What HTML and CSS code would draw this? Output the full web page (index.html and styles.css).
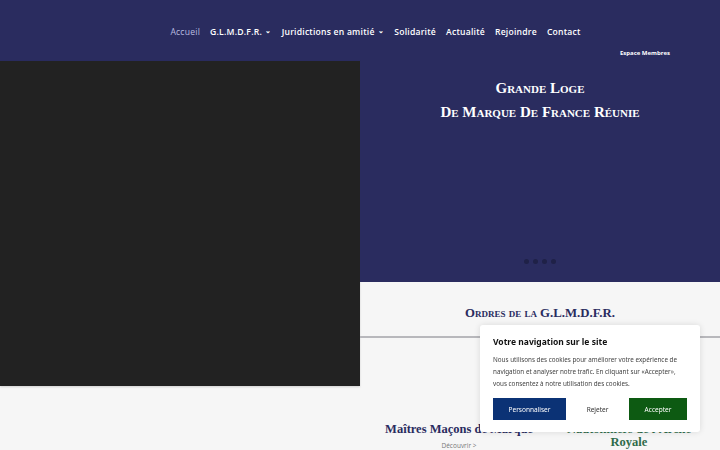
FILE: index.html
```html
<!DOCTYPE html>
<html lang="fr">

<head>
    <meta charset="UTF-8">
    <meta name="viewport" content="width=device-width, initial-scale=1.0">
    <title>Grande Loge de Marque de France Réunie</title>
    <link rel="stylesheet" href="styles.css">
</head>

<body>

    <header class="site-header">
        <nav class="main-nav">
            <a href="#" class="active">Accueil</a>
            <a href="#">G.L.M.D.F.R. <span class="caret">&#8964;</span></a>
            <a href="#">Juridictions en amitié <span class="caret">&#8964;</span></a>
            <a href="#">Solidarité</a>
            <a href="#">Actualité</a>
            <a href="#">Rejoindre</a>
            <a href="#">Contact</a>
        </nav>
        <div class="members-row">
            <a href="#" class="members">Espace Membres</a>
        </div>
    </header>

    <main class="layout">
        <div class="video-panel"></div>

        <div class="right-col">
            <section class="hero">
                <h1>Grande Loge<br>De Marque De France Réunie</h1>
                <div class="dots">
                    <span></span><span></span><span></span><span></span>
                </div>
            </section>

            <section class="orders">
                <h2>Ordres de la G.L.M.D.F.R.</h2>
                <hr class="separator">

                <div class="order-cards">
                    <div class="card">
                        <h3>Maîtres Maçons de Marque</h3>
                        <a href="#" class="more">Découvrir &gt;</a>
                    </div>
                    <div class="card green">
                        <h3>Nautonniers de l'Arche Royale</h3>
                    </div>
                </div>
            </section>
        </div>
    </main>

    <div class="cookie-box">
        <h4>Votre navigation sur le site</h4>
        <p>Nous utilisons des cookies pour améliorer votre expérience de navigation et analyser notre trafic. En cliquant sur «Accepter», vous consentez à notre utilisation des cookies.</p>
        <div class="cookie-buttons">
            <button class="btn-custom">Personnaliser</button>
            <button class="btn-reject">Rejeter</button>
            <button class="btn-accept">Accepter</button>
        </div>
    </div>

</body>

</html>
```

FILE: styles.css
```css
body {
    margin: 0;
    background-color: #f6f6f6;
    font-family: "Open Sans", Arial, sans-serif;
    overflow: hidden;
}

a {
    text-decoration: none;
}

.site-header {
    background-color: #2a2c5f;
    height: 61px;
    box-sizing: border-box;
    padding-top: 25px;
}

.main-nav {
    display: flex;
    justify-content: center;
    gap: 10px;
    padding-left: 31px;
}

.main-nav a {
    color: #ffffff;
    font-size: 8.6px;
    font-weight: 600;
    letter-spacing: 0.22px;
    line-height: 14px;
}

.main-nav a.active {
    color: #b9bde0;
    font-weight: 400;
}

.caret {
    font-size: 7px;
    position: relative;
    top: -2px;
    margin-left: 1px;
}

.members-row {
    display: flex;
    justify-content: flex-end;
    padding-right: 50px;
    margin-top: 9px;
}

.members {
    color: #ffffff;
    font-size: 6px;
    font-weight: 700;
}

.layout {
    display: grid;
    grid-template-columns: 360px 360px;
}

.video-panel {
    background-color: #222222;
    height: 325px;
    box-shadow: 0 1px 2px rgba(0, 0, 0, 0.15);
}

.hero {
    background-color: #2a2c5f;
    height: 221px;
    box-sizing: border-box;
    padding-top: 15px;
}

.hero h1 {
    margin: 0;
    color: #ffffff;
    font-family: "Liberation Serif", "Times New Roman", serif;
    font-variant: small-caps;
    font-size: 15px;
    font-weight: 700;
    line-height: 24px;
    text-align: center;
}

.dots {
    display: flex;
    justify-content: center;
    gap: 4px;
    margin-top: 135px;
}

.dots span {
    width: 5px;
    height: 5px;
    border-radius: 50%;
    background-color: #1f2147;
}

.orders {
    padding-top: 24px;
}

.orders h2 {
    margin: 0;
    color: #2a2c5f;
    font-family: "Liberation Serif", "Times New Roman", serif;
    font-variant: small-caps;
    font-size: 12.8px;
    font-weight: 700;
    text-align: center;
}

.separator {
    border: none;
    border-top: 2px solid #b8b8bc;
    margin: 15px 0 0 0;
}

.order-cards {
    display: grid;
    grid-template-columns: 1fr 1fr;
    padding: 85px 16px 0 24px;
    gap: 20px;
}

.card {
    text-align: center;
}

.card h3 {
    margin: 0;
    color: #2a2c5f;
    font-family: "Liberation Serif", "Times New Roman", serif;
    font-size: 12.5px;
    font-weight: 700;
    line-height: 13px;
}

.card.green h3 {
    color: #2f6b4a;
}

.more {
    display: block;
    margin-top: 5px;
    color: #777;
    font-size: 6.5px;
}

.cookie-box {
    position: fixed;
    left: 480px;
    top: 325px;
    width: 220px;
    height: 107px;
    box-sizing: border-box;
    background: #ffffff;
    padding: 11px 13px;
    box-shadow: 0 0 6px rgba(0, 0, 0, 0.12);
    border-radius: 3px;
    font-family: "Noto Sans", Arial, sans-serif;
}

.cookie-box h4 {
    margin: 0 0 7px 0;
    font-size: 8.5px;
    color: #111;
    font-weight: 700;
}

.cookie-box p {
    margin: 0;
    font-size: 6.3px;
    line-height: 12px;
    color: #444;
}

.cookie-buttons {
    display: flex;
    justify-content: space-between;
    margin-top: 8px;
}

.cookie-buttons button {
    border: none;
    font-family: "Noto Sans", Arial, sans-serif;
    font-size: 6.5px;
    height: 22px;
    cursor: pointer;
}

.btn-custom {
    background-color: #0b3275;
    color: #ffffff;
    width: 73px;
}

.btn-reject {
    background: none;
    color: #333;
    width: 50px;
}

.btn-accept {
    background-color: #0d5a12;
    color: #ffffff;
    width: 58px;
}
```
